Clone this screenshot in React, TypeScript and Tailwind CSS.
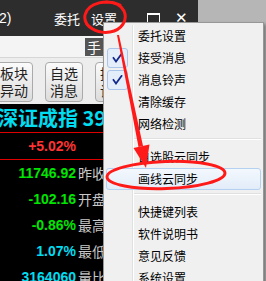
type Item = { t: string; c?: boolean; h?: boolean } | 'sep';

const items: Item[] = [
  { t: '委托设置' },
  { t: '接受消息', c: true },
  { t: '消息铃声', c: true },
  { t: '清除缓存' },
  { t: '网络检测' },
  'sep',
  { t: '自选股云同步' },
  { t: '画线云同步', h: true },
  'sep',
  { t: '快捷键列表' },
  { t: '软件说明书' },
  { t: '意见反馈' },
  { t: '系统设置' },
];

const rows = [
  { v: '11746.92', c: 'text-[#00e600]', l: '昨收' },
  { v: '-102.16', c: 'text-[#00e600]', l: '开盘' },
  { v: '-0.86%', c: 'text-[#00e600]', l: '最高' },
  { v: '1.07%', c: 'text-[#00dcf0]', l: '最低' },
  { v: '3164060', c: 'text-[#00dcf0]', l: '量比' },
];

function Check() {
  return (
    <div className="w-[21px] h-[20px] rounded-[3px] border border-[#a9c6ea] bg-[#e4eefb] flex items-center justify-center">
      <svg width="11" height="10" viewBox="0 0 11 10" fill="none">
        <path d="M1.5 5 L4 8.5 L9.5 1" stroke="#14288c" strokeWidth="1.8" strokeLinecap="square" />
      </svg>
    </div>
  );
}

export default function App() {
  return (
    <div className="relative w-[266px] h-[281px] overflow-hidden bg-[#b6b6b6] flex font-['Noto_Sans_CJK_SC',sans-serif]">
      {/* app window behind the menu */}
      <div className="w-[198px] flex flex-col">
        <div className="h-[36px] shrink-0 bg-[#2d2d2d] flex items-center text-white text-[13px] leading-none">
          <span className="w-[55px] ml-[-1px] font-['Liberation_Sans',sans-serif] text-[14px]">2)</span>
          <span className="w-[37px]">委托</span>
          <span className="w-[56px]">设置</span>
          <span className="w-[13px] h-[10px] border border-white border-t-2" />
          <span className="ml-[15px] text-[15px] font-['DejaVu_Sans',sans-serif]">✕</span>
        </div>
        <div className="h-[22px] shrink-0 bg-[#f4f4f4] border-b border-[#d6d6d6] flex">
          <div className="ml-[85px] mt-[2px] w-[18px] h-[18px] bg-[#555] text-white text-[14px] leading-none flex items-center justify-center">
            手
          </div>
        </div>
        <div className="h-[46px] shrink-0 bg-[#ededed] flex gap-[12px] pt-[4px] ml-[-5px] text-[14px] leading-[17px] text-[#222]">
          {['板块|异动', '自选|消息', '提醒|设置'].map((b) => (
            <div
              key={b}
              className="w-[38px] h-[40px] shrink-0 rounded-[4px] border border-[#aaa] bg-gradient-to-b from-[#fbfbfb] to-[#dcdcdc] flex flex-col items-center justify-center"
            >
              {b.split('|').map((s) => (
                <span key={s}>{s}</span>
              ))}
            </div>
          ))}
        </div>
        <div className="flex-1 bg-black">
          <div className="h-[29px] border-b border-[#e00000] flex items-center text-[20px] font-bold text-[#00dcf0] leading-none whitespace-nowrap">
            <span className="ml-[-2px]">深证成指 3964.16</span>
          </div>
          <div className="h-[27px] border-b border-[#e00000] flex items-center font-['Liberation_Sans',sans-serif] font-bold text-[14px] text-[#ff3333]">
            <span className="w-[76px] text-right">+5.02%</span>
          </div>
          {rows.map((r) => (
            <div key={r.v} className="h-[26px] flex items-center text-[14px] whitespace-nowrap">
              <span className={`w-[76px] text-right font-['Liberation_Sans',sans-serif] font-bold ${r.c}`}>{r.v}</span>
              <span className="ml-[2px] text-[#c8c8c8]">{r.l}</span>
            </div>
          ))}
        </div>
      </div>

      {/* dropdown menu */}
      <div className="absolute left-[103px] top-[22px] w-[161px] h-[270px] border border-[#979797] bg-[#f0f0f0] pt-[2px] shadow-[2px_2px_3px_rgba(0,0,0,0.35)] text-[12px] text-black leading-none">
        <div className="absolute left-[28px] top-[2px] bottom-0 w-px bg-[#e0e1e1]" />
        <div className="absolute left-[29px] top-[2px] bottom-0 w-px bg-white" />
        {items.map((it, i) =>
          it === 'sep' ? (
            <div key={i} className="relative h-[8px] pl-[30px] pr-[2px]">
              <div className="mt-[3px] h-px bg-[#e0e0e0]" />
              <div className="h-px bg-white" />
            </div>
          ) : (
            <div
              key={i}
              className={`relative h-[22px] mx-[2px] flex items-center rounded-[3px] border ${
                it.h
                  ? 'border-[#b5d1f2] bg-gradient-to-b from-[#f3f8fd] to-[#e2ecf9]'
                  : 'border-transparent'
              }`}
            >
              <div className="w-[31px] shrink-0 flex items-center">{it.c && <Check />}</div>
              <span>{it.t}</span>
            </div>
          ),
        )}
      </div>

      {/* red annotations */}
      <svg className="absolute inset-0 pointer-events-none" width="266" height="281" viewBox="0 0 266 281" fill="none">
        <path
          d="M120 5 C108 -1 88 2 85 15 C83 27 98 34 110 32 C122 30 128 20 124 11 C121 5 114 2 106 2"
          stroke="#ff1a1a"
          strokeWidth="3"
          strokeLinecap="round"
        />
        <polygon points="117,35 119,35 143,146 138.5,147" fill="#ff1a1a" />
        <polygon points="146,168 133.5,148 149.5,144.5" fill="#ff1a1a" />
        <ellipse cx="166" cy="175" rx="59" ry="13.5" transform="rotate(-2 166 175)" stroke="#ff1a1a" strokeWidth="3" />
      </svg>
    </div>
  );
}
